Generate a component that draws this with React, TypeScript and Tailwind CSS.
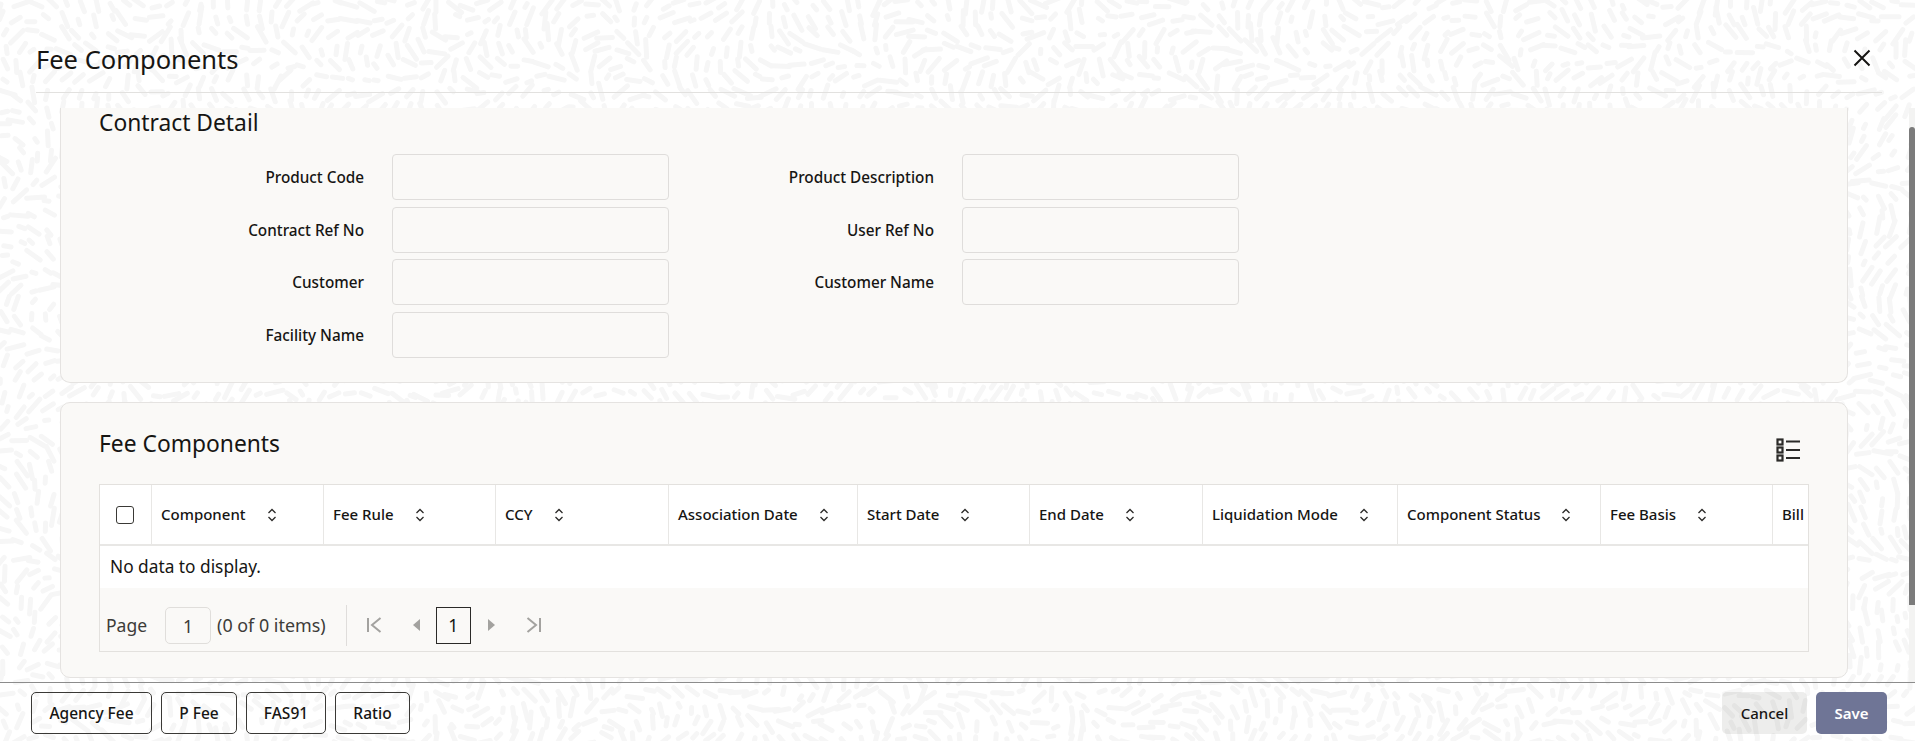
import { useMemo } from "react";

const FONT = "font-['Noto_Sans','Open_Sans',sans-serif]";

const columns = [
  { label: "Component", width: "w-[172px]" },
  { label: "Fee Rule", width: "w-[172px]" },
  { label: "CCY", width: "w-[173px]" },
  { label: "Association Date", width: "w-[189px]" },
  { label: "Start Date", width: "w-[172px]" },
  { label: "End Date", width: "w-[173px]" },
  { label: "Liquidation Mode", width: "w-[195px]" },
  { label: "Component Status", width: "w-[203px]" },
  { label: "Fee Basis", width: "w-[172px]" },
  { label: "Bill", width: "w-[172px]" },
];

// the wallpaper is a field of short rounded dashes that swirl in patches
function Wallpaper() {
  const dashes = useMemo(() => {
    let seed = 7;
    const rand = () => {
      seed = (seed * 16807) % 2147483647;
      return seed / 2147483647;
    };
    const out: { x1: number; y1: number; x2: number; y2: number }[] = [];
    for (let y = 0; y < 760; y += 15) {
      for (let x = 0; x < 1930; x += 15) {
        const px = x + rand() * 8;
        const py = y + rand() * 8;
        const a =
          Math.sin(px / 48) * 1.7 + Math.cos(py / 40) * 1.7 + Math.sin((px + py) / 120) * 1.4 + rand() * 0.35;
        const len = 2 + rand() * 7;
        out.push({
          x1: px - Math.cos(a) * len,
          y1: py - Math.sin(a) * len,
          x2: px + Math.cos(a) * len,
          y2: py + Math.sin(a) * len,
        });
      }
    }
    return out;
  }, []);

  return (
    <svg className="absolute inset-0 h-full w-full" aria-hidden="true">
      <g stroke="#f6f6f6" strokeWidth="5" strokeLinecap="round">
        {dashes.map((d, i) => (
          <line key={i} x1={d.x1} y1={d.y1} x2={d.x2} y2={d.y2} />
        ))}
      </g>
    </svg>
  );
}

function SortIcon() {
  return (
    <svg width="10" height="14" viewBox="0 0 10 14" fill="none" stroke="#2b2a28" strokeWidth="1.3" className="ml-[21px] shrink-0">
      <path d="M1.5 5 5 1.5 8.5 5M1.5 9 5 12.5 8.5 9" />
    </svg>
  );
}

function Field({ label, labelWidth }: { label: string; labelWidth: string }) {
  return (
    <div className="flex h-[46px] items-center">
      <span className={`${labelWidth} pt-[1px] text-right text-[15.3px] font-medium text-[#161513]`}>{label}</span>
      <div className="ml-[28px] h-[46px] w-[277px] rounded-[4px] border border-[#dfdddb] bg-[#faf9f7]" />
    </div>
  );
}

function ColumnsIcon() {
  return (
    <svg width="24" height="24" viewBox="0 0 24 24" fill="none" stroke="#2b2a28" className="mt-[13px]">
      <g strokeWidth="2.2">
        <rect x="1.5" y="1.5" width="5" height="5" />
        <rect x="1.5" y="9.5" width="5" height="5" />
        <rect x="1.5" y="17.5" width="5" height="5" />
      </g>
      <path d="M10 3.5h14M10 12h14M10 20h14" strokeWidth="2" />
    </svg>
  );
}

function FirstIcon() {
  return (
    <svg width="16" height="16" viewBox="0 0 16 16" fill="none" stroke="#a3a29f" strokeWidth="2">
      <path d="M2 1v14M14.5 1 6 8l8.5 7" />
    </svg>
  );
}

function LastIcon() {
  return (
    <svg width="16" height="16" viewBox="0 0 16 16" fill="none" stroke="#a3a29f" strokeWidth="2">
      <path d="M14 1v14M1.5 1 10 8l-8.5 7" />
    </svg>
  );
}

function Button({ label, width }: { label: string; width: string }) {
  return (
    <button className={`${width} h-[42px] rounded-[5px] border border-[#3a3936] pt-[2px] text-[15.5px] font-medium text-[#161513]`}>
      {label}
    </button>
  );
}

export default function App() {
  return (
    <div className={`${FONT} relative flex h-screen w-full flex-col overflow-hidden bg-white text-[#161513]`}>
      <Wallpaper />

      <header className="relative mr-[33px] ml-[36px] flex h-[93px] shrink-0 items-center justify-between border-b border-[#e2e1df] pt-[26px]">
        <h1 className="text-[25.5px] leading-8 font-normal">Fee Components</h1>
        <svg width="18" height="18" viewBox="0 0 18 18" fill="none" stroke="#161513" strokeWidth="2" className="mr-[11px] mb-[2px]">
          <path d="M1.5 1.5l15 15M16.5 1.5l-15 15" />
        </svg>
      </header>

      <div className="relative mt-[15px] flex min-h-0 flex-1">
        <main className="min-w-0 flex-1 overflow-hidden pr-[61px] pl-[60px]">
          <section className="h-[275px] rounded-b-[10px] border-x border-b border-[#e5e3e1] bg-[#faf9f7] pl-[38px]">
            <h2 className="h-[30px] text-[22.8px] leading-[30px] font-normal">Contract Detail</h2>
            <div className="mt-[16px] ml-[-38px] flex">
              <div className="flex flex-col gap-[6.6px]">
                <Field label="Product Code" labelWidth="w-[303px]" />
                <Field label="Contract Ref No" labelWidth="w-[303px]" />
                <Field label="Customer" labelWidth="w-[303px]" />
                <Field label="Facility Name" labelWidth="w-[303px]" />
              </div>
              <div className="flex flex-col gap-[6.6px]">
                <Field label="Product Description" labelWidth="w-[265px]" />
                <Field label="User Ref No" labelWidth="w-[265px]" />
                <Field label="Customer Name" labelWidth="w-[265px]" />
              </div>
            </div>
          </section>

          <section className="mt-[19px] h-[276px] rounded-[10px] border border-[#e5e3e1] bg-[#faf9f7] px-[38px] pt-[25px]">
            <div className="flex h-[31px] items-center justify-between pr-[9px]">
              <h2 className="text-[22.8px] leading-[30px] font-normal">Fee Components</h2>
              <ColumnsIcon />
            </div>
            <div className="mt-[25px] overflow-hidden border border-[#e3e1de]">
              <div className="flex h-[61px] border-b-2 border-[#e8e7e5] bg-white">
                <div className="flex w-[52px] shrink-0 items-center justify-center border-r border-[#e8e7e5] pr-[2px]">
                  <div className="h-[18px] w-[18px] rounded-[3px] border-[1.5px] border-[#3a3936] bg-white" />
                </div>
                {columns.map((c) => (
                  <div key={c.label} className={`${c.width} flex shrink-0 items-center border-r border-[#e8e7e5] pl-[9px]`}>
                    <span className="text-[15px] font-medium whitespace-nowrap">{c.label}</span>
                    <SortIcon />
                  </div>
                ))}
              </div>
              <div className="flex h-[42px] items-center bg-white pl-[10px] text-[17.3px]">No data to display.</div>
              <div className="flex h-[63px] items-center pt-[11px] pl-[6px] text-[#3d3c39]">
                <span className="text-[17.5px]">Page</span>
                <div className="ml-[18px] flex h-[37px] w-[46px] items-center justify-center rounded-[5px] border border-[#e0dedb] pt-[2px] text-[17.5px]">1</div>
                <span className="ml-[6px] text-[17.9px]">(0 of 0 items)</span>
                <div className="ml-[20px] h-[41px] w-px bg-[#dfdddb]" />
                <div className="ml-[19px] flex items-center">
                  <FirstIcon />
                  <span className="ml-[31px] h-0 w-0 border-y-[6px] border-r-[7px] border-y-transparent border-r-[#a3a29f]" />
                  <div className="ml-[16px] flex h-[37px] w-[35px] items-center justify-center border border-[#2b2a28] text-[17.5px] text-[#161513]">1</div>
                  <span className="ml-[17px] h-0 w-0 border-y-[6px] border-l-[7px] border-y-transparent border-l-[#a3a29f]" />
                  <div className="ml-[31px]">
                    <LastIcon />
                  </div>
                </div>
              </div>
            </div>
          </section>
        </main>

        <div className="w-[6px] shrink-0 bg-[#f3f3f2] pt-[19px]">
          <div className="h-[478px] rounded-t-[4px] bg-[#7b7b7b]" />
        </div>
      </div>

      <footer className="relative flex h-[59px] shrink-0 items-center justify-between border-t border-[#8c8c8c] pt-[1px] pr-[28px] pl-[31px]">
        <div className="flex gap-[9px]">
          <Button label="Agency Fee" width="w-[121px]" />
          <Button label="P Fee" width="w-[76px]" />
          <Button label="FAS91" width="w-[80px]" />
          <Button label="Ratio" width="w-[75px]" />
        </div>
        <div className="flex gap-[9px]">
          <button className="h-[42px] w-[85px] rounded-[5px] bg-[#161513]/8 pt-[1px] text-[15px] font-medium">Cancel</button>
          <button className="h-[42px] w-[71px] rounded-[5px] bg-[#6f7596] pt-[1px] text-[15px] font-semibold text-white">Save</button>
        </div>
      </footer>
    </div>
  );
}
